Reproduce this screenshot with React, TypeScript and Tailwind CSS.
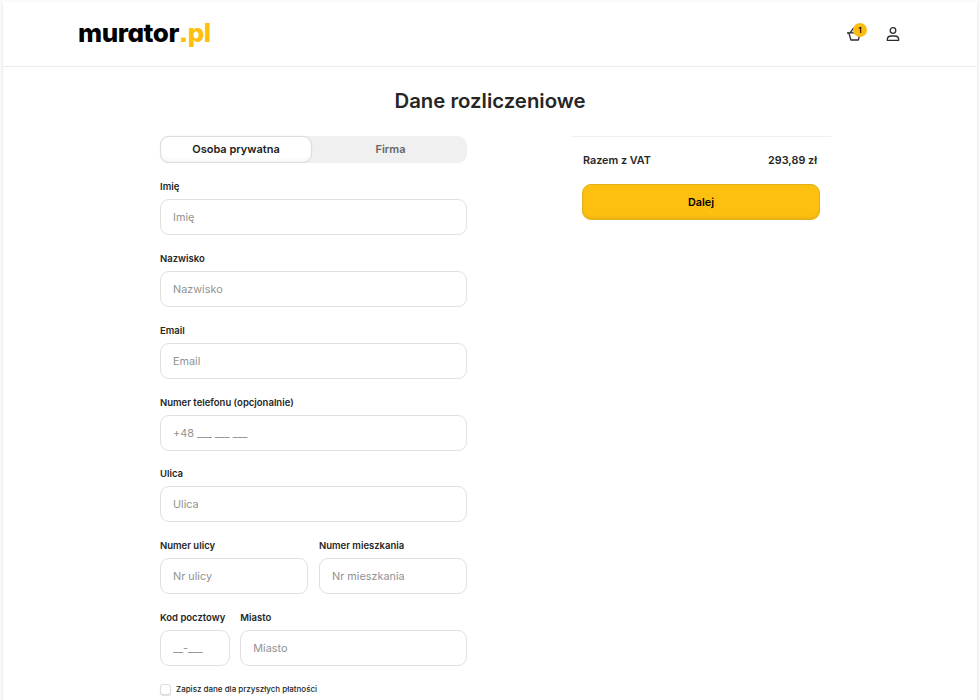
import { useState } from "react";

function Logo() {
  return (
    <a
      href="#"
      className="-mt-[2px] flex items-baseline text-[26px] leading-[32px] font-extrabold tracking-[-0.45px] text-black [font-feature-settings:'cv11','ss03','ss07']"
    >
      murator<span className="text-[#fdc010]">.pl</span>
    </a>
  );
}

function BasketIcon() {
  return (
    <svg
      className="h-4 w-4"
      viewBox="0 0 16 16"
      fill="none"
      stroke="#2e2b2d"
      strokeWidth="1.3"
      strokeLinejoin="round"
    >
      <path d="M.4 6.9h14.2M1.9 7l2 7h7.4l2-7M3.2 6.9L6.6 1.9" />
      <path d="M.9 6.3v1.4" />
    </svg>
  );
}

function UserIcon() {
  return (
    <svg
      className="h-4 w-4"
      viewBox="0 0 16 16"
      fill="none"
      stroke="#2e2b2d"
      strokeWidth="1.3"
      strokeLinejoin="round"
    >
      <circle cx="8" cy="4.5" r="2.8" />
      <path d="M2.3 14.3v-.7c0-2.2 1.8-3.6 4-3.6h3.4c2.2 0 4 1.4 4 3.6v.7z" />
    </svg>
  );
}

type FieldProps = {
  label: string;
  placeholder: string;
  className?: string;
};

function Field({ label, placeholder, className = "" }: FieldProps) {
  return (
    <label className={`flex h-[71.87px] flex-col ${className}`}>
      <span className="h-[19px] text-[9.5px] leading-[14px] font-semibold whitespace-nowrap text-[#262626]">
        {label}
      </span>
      <input
        type="text"
        placeholder={placeholder}
        className="h-[36px] w-full min-w-0 rounded-[9px] border border-[#e0e0e0] bg-white px-[12px] text-[10.85px] text-[#262626] outline-none placeholder:text-[#929292]"
      />
    </label>
  );
}

export default function App() {
  const [tab, setTab] = useState("private");

  const tabClass = (name: string) =>
    tab === name
      ? "rounded-[9px] border border-[#dedede] bg-white text-[#222] shadow-[0_0_1px_#d2d2d2,inset_0_-4px_4px_-2px_#f5f5f5]"
      : "text-[#666]";

  return (
    <div className="h-[700px] overflow-hidden bg-[#fafafa] px-[3px] pt-[2px] font-['Inter',sans-serif] text-[#262626]">
      <div className="h-full bg-white shadow-[0_2px_3px_#dedede]">
        <header className="flex h-[65px] items-center justify-between border-b border-[#ececec] pr-[76px] pl-[75px]">
          <Logo />
          <div className="flex items-center gap-[22px]">
            <button className="relative" aria-label="Koszyk">
              <BasketIcon />
              <span className="absolute -top-[3px] left-[6px] flex h-[14px] w-[14px] items-center justify-center rounded-full bg-[#f9bd12] text-[8px] font-semibold text-black">
                1
              </span>
            </button>
            <button aria-label="Konto">
              <UserIcon />
            </button>
          </div>
        </header>

        <h1 className="pt-[20px] text-center text-[20.35px] leading-[28px] font-semibold">
          Dane rozliczeniowe
        </h1>

        <main className="flex items-start pt-[21px] pl-[157px]">
          <form className="w-[307px]">
            <div className="mb-[17px] flex h-[27px] rounded-[9px] bg-[#f0f0f0] text-[11px] font-semibold">
              <button
                type="button"
                onClick={() => setTab("private")}
                className={`w-[152px] ${tabClass("private")}`}
              >
                Osoba prywatna
              </button>
              <button
                type="button"
                onClick={() => setTab("company")}
                className={`flex-1 pl-[2px] ${tabClass("company")}`}
              >
                Firma
              </button>
            </div>

            <Field label="Imię" placeholder="Imię" />
            <Field label="Nazwisko" placeholder="Nazwisko" />
            <Field label="Email" placeholder="Email" />
            <Field
              label="Numer telefonu (opcjonalnie)"
              placeholder="+48 ___ ___ ___"
            />
            <Field label="Ulica" placeholder="Ulica" />
            <div className="flex gap-[11px]">
              <Field
                label="Numer ulicy"
                placeholder="Nr ulicy"
                className="w-[148px]"
              />
              <Field
                label="Numer mieszkania"
                placeholder="Nr mieszkania"
                className="w-[148px]"
              />
            </div>
            <div className="flex gap-[10.3px]">
              <Field
                label="Kod pocztowy"
                placeholder="__-___"
                className="w-[70px]"
              />
              <Field label="Miasto" placeholder="Miasto" className="flex-1" />
            </div>

            <label className="flex items-center gap-[5px] text-[8px] leading-[12px] font-medium">
              <input
                type="checkbox"
                className="h-[11px] w-[11px] appearance-none rounded-[3px] border border-[#dcdcdc] bg-white shadow-[0_1px_1px_#dedede]"
              />
              Zapisz dane dla przyszłych płatności
            </label>
          </form>

          <aside className="ml-[104px] w-[260px] border-t border-[#f0f0f0] px-[11px] pt-[16px]">
            <div className="flex justify-between pr-[3px] pl-[1px] text-[10.8px] leading-[16px] font-semibold">
              <span>Razem z VAT</span>
              <span>293,89 zł</span>
            </div>
            <button className="mt-[15px] h-[36px] w-full rounded-[9px] border border-[#e3b11c] bg-[#fdc010] pt-[2px] text-[10.8px] font-semibold text-black shadow-[inset_0_-3px_3px_-1px_#efb40f]">
              Dalej
            </button>
          </aside>
        </main>
      </div>
    </div>
  );
}
